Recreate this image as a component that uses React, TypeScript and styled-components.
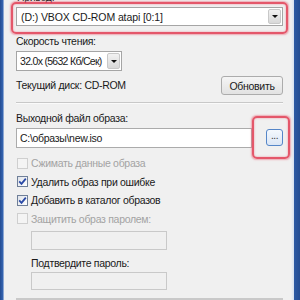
import React from "react";
import styled, { createGlobalStyle } from "styled-components";

const Global = createGlobalStyle`
  html, body { margin: 0; padding: 0; background: #f0f0f0; }
  body { font-family: "Liberation Sans", Arial, sans-serif; font-size: 10.5px; letter-spacing: -0.3px; color: #1a1a1a; }
`;

const Window = styled.div`
  display: flex;
  width: 300px;
  height: 300px;
  overflow: hidden;
  background: #f0f0f0;
`;

const FrameLeft = styled.div`
  width: 4px;
  flex: none;
  background: linear-gradient(to right, #244c92, #3564b0 70%, #c9d6ea);
`;

const FrameRight = styled.div`
  width: 9px;
  flex: none;
  background: linear-gradient(to right, #f0f0f0 0, #dfe7f2 2px, #d4deee 3px, #2d5aa4 3px, #244c92 100%);
`;

const Panel = styled.div`
  flex: 1;
  display: flex;
  flex-direction: column;
  padding: 0 8px 0 12px;
  min-width: 0;
`;

const Label = styled.div<{ $top?: number; $indent?: number }>`
  line-height: 13px;
  height: 13px;
  margin-top: ${(p) => p.$top ?? 0}px;
  padding-left: ${(p) => p.$indent ?? 0}px;
  white-space: nowrap;
`;

const Anchor = styled.div<{ $top?: number }>`
  position: relative;
  margin-top: ${(p) => p.$top ?? 0}px;
`;

const Highlight = styled.div<{ $l: number; $t: number; $r: number; $b: number }>`
  position: absolute;
  left: ${(p) => p.$l}px;
  top: ${(p) => p.$t}px;
  right: ${(p) => p.$r}px;
  bottom: ${(p) => p.$b}px;
  border: 2px solid rgba(226, 60, 82, 0.85);
  border-radius: 5px;
  box-shadow: 0 0 1.5px 0.5px rgba(235, 100, 120, 0.5), inset 0 0 1.5px 0.5px rgba(235, 100, 120, 0.4);
  pointer-events: none;
`;

const Combo = styled.div<{ $w?: number; $h: number }>`
  display: flex;
  align-items: center;
  box-sizing: border-box;
  width: ${(p) => (p.$w ? `${p.$w}px` : "100%")};
  height: ${(p) => p.$h}px;
  border: 1px solid #a5a5a5;
  background: #fff;
  padding: 1px;
`;

const ComboText = styled.div<{ $tight?: boolean }>`
  flex: 1;
  padding-left: ${(p) => (p.$tight ? 2 : 3)}px;
  letter-spacing: ${(p) => (p.$tight ? "-0.7px" : "-0.1px")};
  white-space: nowrap;
  overflow: hidden;
`;

const Arrow = styled.div`
  width: 11px;
  flex: none;
  align-self: stretch;
  display: flex;
  align-items: center;
  justify-content: center;
  background: linear-gradient(#f2f2f2, #d8d8d8);
  border: 1px solid #c8c8c8;
  border-radius: 2px;
  &::after {
    content: "";
    border-left: 3px solid transparent;
    border-right: 3px solid transparent;
    border-top: 3px solid #111;
  }
`;

const Row = styled.div<{ $top?: number }>`
  display: flex;
  align-items: center;
  justify-content: space-between;
  margin-top: ${(p) => p.$top ?? 0}px;
`;

const Button = styled.div`
  box-sizing: border-box;
  width: 62px;
  height: 19px;
  display: flex;
  align-items: center;
  justify-content: center;
  border: 1px solid #acacac;
  border-radius: 3px;
  background: linear-gradient(#f5f5f5, #e2e2e2);
`;

const Separator = styled.div<{ $top?: number }>`
  height: 1px;
  background: #c8c8c8;
  border-bottom: 1px solid #fafafa;
  margin-top: ${(p) => p.$top ?? 0}px;
`;

const FileRow = styled.div`
  display: flex;
  align-items: center;
  gap: 14px;
`;

const Input = styled.div<{ $w?: number; $h: number; $disabled?: boolean; $indent?: number; $top?: number }>`
  box-sizing: border-box;
  ${(p) => (p.$w ? `width: ${p.$w}px;` : "flex: 1;")}
  height: ${(p) => p.$h}px;
  margin-left: ${(p) => p.$indent ?? 0}px;
  margin-top: ${(p) => p.$top ?? 0}px;
  border: 1px solid ${(p) => (p.$disabled ? "#c9c9c9" : "#ababab")};
  background: ${(p) => (p.$disabled ? "#f0f0f0" : "#fff")};
  display: flex;
  align-items: center;
  padding-left: 3px;
`;

const DotsButton = styled.div`
  box-sizing: border-box;
  width: 17px;
  height: 17px;
  border: 1px solid #5586c8;
  border-radius: 3px;
  background: linear-gradient(#f4f8fd, #dbe6f5);
  display: flex;
  align-items: center;
  justify-content: center;
  font-size: 10px;
  line-height: 1;
  padding-bottom: 3px;
  letter-spacing: -0.5px;
  color: #333;
`;

const CheckRow = styled.div<{ $top?: number; $disabled?: boolean }>`
  display: flex;
  align-items: center;
  gap: 3px;
  height: 13px;
  margin-top: ${(p) => p.$top ?? 0}px;
  color: ${(p) => (p.$disabled ? "#a3a3a3" : "#1a1a1a")};
  white-space: nowrap;
`;

const Box = styled.div<{ $disabled?: boolean }>`
  box-sizing: border-box;
  width: 11px;
  height: 11px;
  margin-left: 1px;
  border: 1px solid ${(p) => (p.$disabled ? "#cfcfcf" : "#6f7f98")};
  background: ${(p) => (p.$disabled ? "#f4f4f4" : "linear-gradient(135deg, #dfe3ea, #ffffff)")};
  display: flex;
  align-items: center;
  justify-content: center;
`;

const Check = () => (
  <svg width="9" height="9" viewBox="0 0 9 9">
    <path d="M1.2 4.4 L3.5 6.8 L7.8 1.6" fill="none" stroke="#2a4aa6" strokeWidth="1.8" />
  </svg>
);

const BottomEdge = styled.div<{ $top?: number }>`
  height: 2px;
  margin-top: ${(p) => p.$top ?? 0}px;
  background: #c9c9c9;
`;

export default function App() {
  return (
    <>
      <Global />
      <Window>
        <FrameLeft />
        <Panel>
          <Label $top={-9} $indent={1}>Привод:</Label>
          <Anchor $top={3}>
            <Combo $h={19}>
              <ComboText>(D:) VBOX CD-ROM atapi [0:1]</ComboText>
              <Arrow />
            </Combo>
            <Highlight $l={-5} $t={-5} $r={-5} $b={-8} />
          </Anchor>
          <Label $top={9}>Скорость чтения:</Label>
          <Anchor $top={3}>
            <Combo $w={106} $h={20}>
              <ComboText $tight>32.0x (5632 Кб/Сек)</ComboText>
              <Arrow />
            </Combo>
          </Anchor>
          <Row $top={5}>
            <Label>Текущий диск: CD-ROM</Label>
            <Button>Обновить</Button>
          </Row>
          <Separator $top={7} />
          <Label $top={8}>Выходной файл образа:</Label>
          <Anchor $top={3}>
            <FileRow>
              <Input $h={20}>C:\образы\new.iso</Input>
              <DotsButton>...</DotsButton>
            </FileRow>
            <Highlight $l={236} $t={-12} $r={-7} $b={-11} />
          </Anchor>
          <CheckRow $top={9} $disabled>
            <Box $disabled />
            Сжимать данные образа
          </CheckRow>
          <CheckRow $top={6}>
            <Box><Check /></Box>
            Удалить образ при ошибке
          </CheckRow>
          <CheckRow $top={6}>
            <Box><Check /></Box>
            Добавить в каталог образов
          </CheckRow>
          <CheckRow $top={6} $disabled>
            <Box $disabled />
            Защитить образ паролем:
          </CheckRow>
          <Input $w={136} $h={19} $disabled $indent={15} $top={6} />
          <Label $top={7} $indent={15}>Подтвердите пароль:</Label>
          <Input $w={136} $h={19} $disabled $indent={15} $top={2} />
          <BottomEdge $top={8} />
        </Panel>
        <FrameRight />
      </Window>
    </>
  );
}
